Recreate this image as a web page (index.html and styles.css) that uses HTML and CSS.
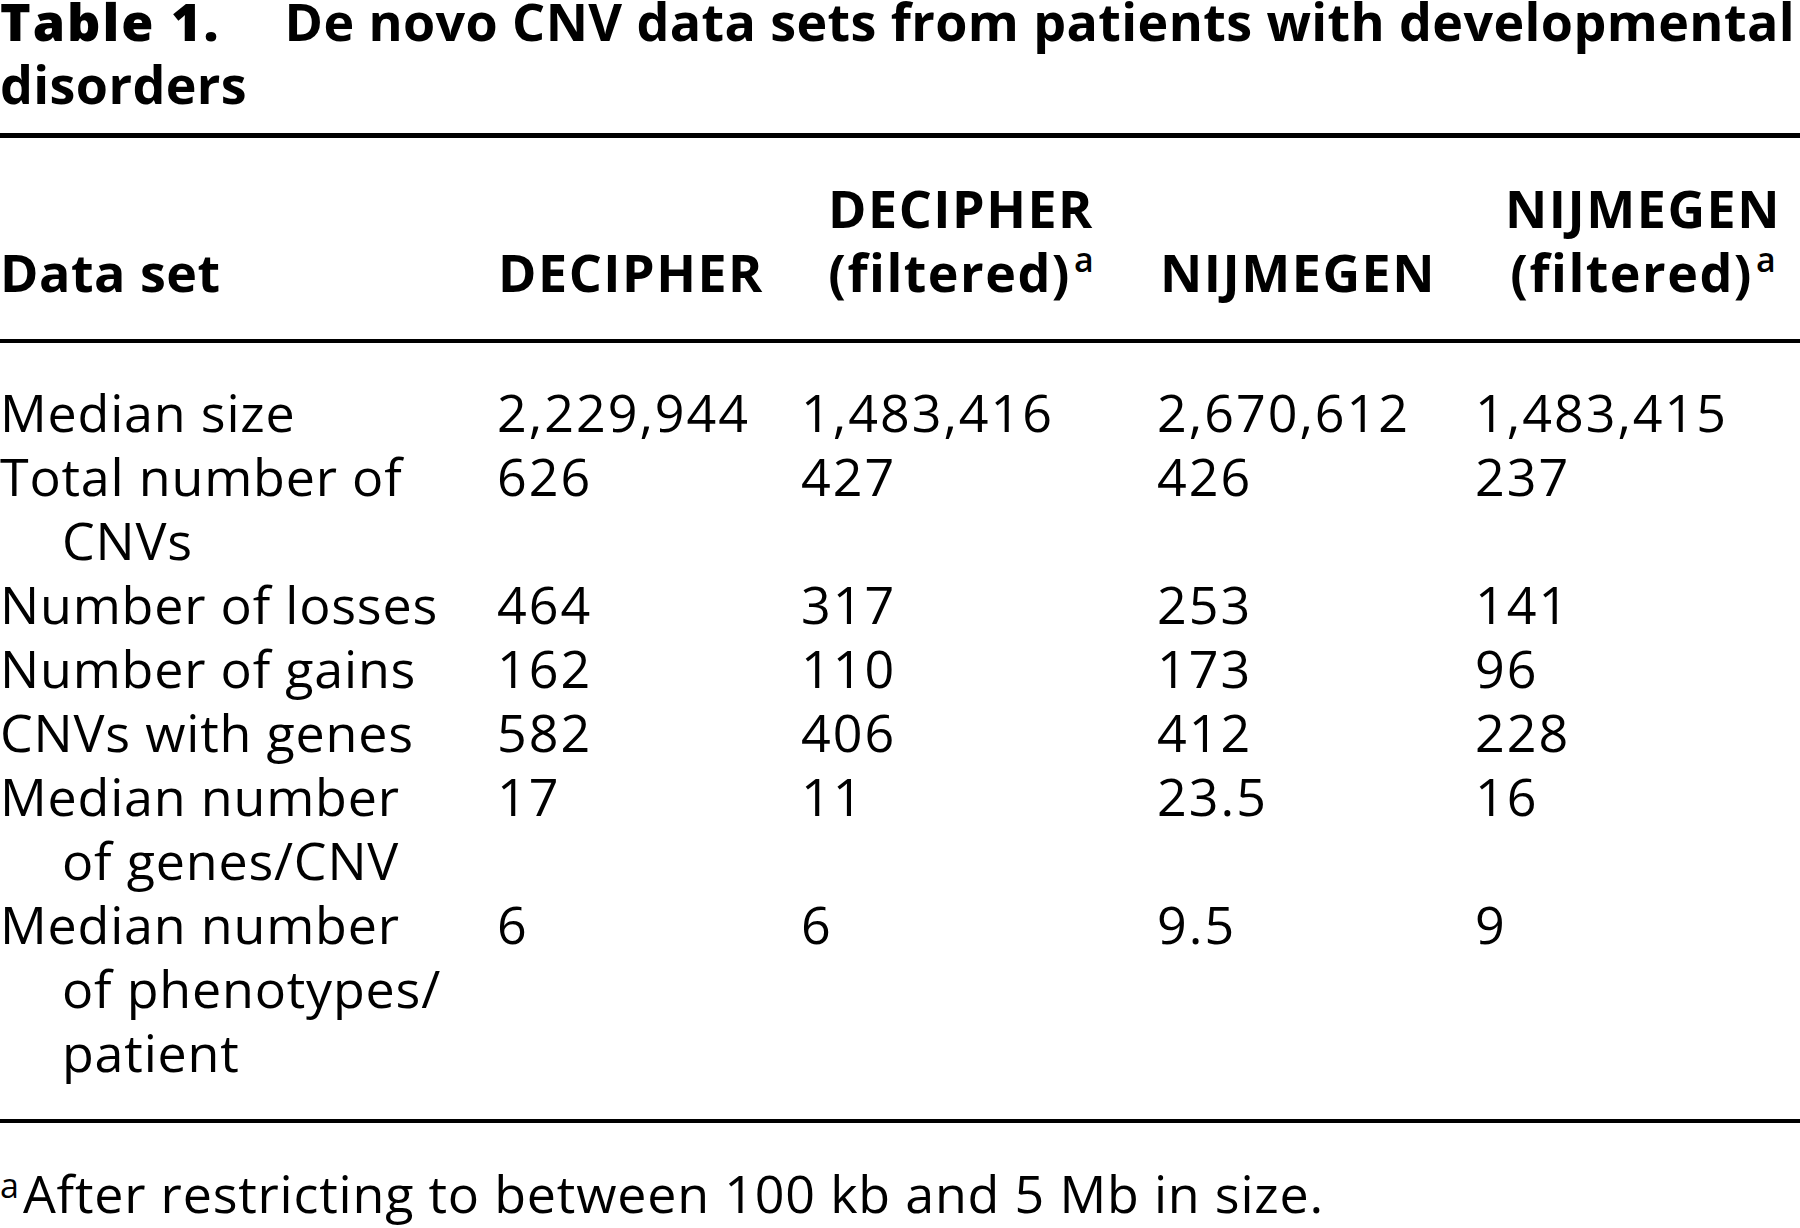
FILE: index.html
```html
<!DOCTYPE html>
<html lang="en">
<head>
<meta charset="utf-8">
<title>Table 1</title>
<link rel="stylesheet" href="styles.css">
</head>
<body>
<div class="page">
  <h1 class="title"><span class="tno">Table 1.</span>De novo CNV data sets from patients with developmental<br>disorders</h1>
  <div class="table">
    <div class="grid thead">
      <div class="th lab">Data set</div>
      <div class="th">DECIPHER</div>
      <div class="th">DECIPHER<br>(filtered)<sup>a</sup></div>
      <div class="th">NIJMEGEN</div>
      <div class="th last">NIJMEGEN<br>(filtered)<sup>a</sup></div>
    </div>
    <div class="grid tbody">
      <div class="lab">Median size</div>
      <div class="num">2,229,944</div>
      <div class="num">1,483,416</div>
      <div class="num">2,670,612</div>
      <div class="num">1,483,415</div>

      <div class="lab">Total number of<br>CNVs</div>
      <div class="num">626</div>
      <div class="num">427</div>
      <div class="num">426</div>
      <div class="num">237</div>

      <div class="lab">Number of losses</div>
      <div class="num">464</div>
      <div class="num">317</div>
      <div class="num">253</div>
      <div class="num">141</div>

      <div class="lab">Number of gains</div>
      <div class="num">162</div>
      <div class="num">110</div>
      <div class="num">173</div>
      <div class="num">96</div>

      <div class="lab">CNVs with genes</div>
      <div class="num">582</div>
      <div class="num">406</div>
      <div class="num">412</div>
      <div class="num">228</div>

      <div class="lab">Median number<br>of genes/CNV</div>
      <div class="num">17</div>
      <div class="num">11</div>
      <div class="num">23.5</div>
      <div class="num">16</div>

      <div class="lab">Median number<br>of phenotypes/<br>patient</div>
      <div class="num">6</div>
      <div class="num">6</div>
      <div class="num">9.5</div>
      <div class="num">9</div>
    </div>
  </div>
  <p class="foot"><sup>a</sup>After restricting to between 100 kb and 5 Mb in size.</p>
</div>
</body>
</html>
```
FILE: styles.css
```css
html, body {
  margin: 0;
  padding: 0;
  background: #fff;
  overflow: hidden;
}

body {
  font-family: "Open Sans", "Liberation Sans", sans-serif;
  font-size: 52px;
  color: #000;
}

.page {
  width: 1800px;
}

.title {
  margin: -11px 0 0;
  font-size: 52px;
  line-height: 63px;
  font-weight: 700;
  letter-spacing: 0.4px;
  white-space: nowrap;
}

.tno {
  font-weight: 800;
  letter-spacing: 2px;
  margin-right: 64px;
}

.table {
  margin-top: 18px;
  border-top: 5px solid #000;
  border-bottom: 4px solid #000;
}

.grid {
  display: grid;
  grid-template-columns: 497px 304px 356px 318px 325px;
}

.thead {
  padding: 38px 0 35px;
  border-bottom: 4px solid #000;
  line-height: 64px;
  font-weight: 700;
  letter-spacing: 1.5px;
  align-items: end;
}

.th {
  text-align: center;
  padding-right: 36px;
}

.th.lab {
  text-align: left;
  letter-spacing: 0.5px;
}

.th.last {
  padding-right: 0;
  padding-left: 11px;
}

.tbody {
  padding: 37px 0 35px;
  line-height: 64px;
  align-items: start;
}

.lab {
  padding-left: 62px;
  text-indent: -62px;
  letter-spacing: 0.8px;
}

.th.lab {
  padding-left: 0;
  text-indent: 0;
}

.num {
  letter-spacing: 2px;
  white-space: nowrap;
}

sup {
  font-size: 34px;
  line-height: 0;
  vertical-align: 20px;
  font-weight: 600;
  letter-spacing: 0;
  margin-left: 3px;
}

.foot {
  margin: 38px 0 0;
  line-height: 64px;
  letter-spacing: 0.8px;
  white-space: nowrap;
}

.foot sup {
  vertical-align: 15px;
  font-weight: 400;
  margin-left: 0;
  margin-right: 4px;
}
```
